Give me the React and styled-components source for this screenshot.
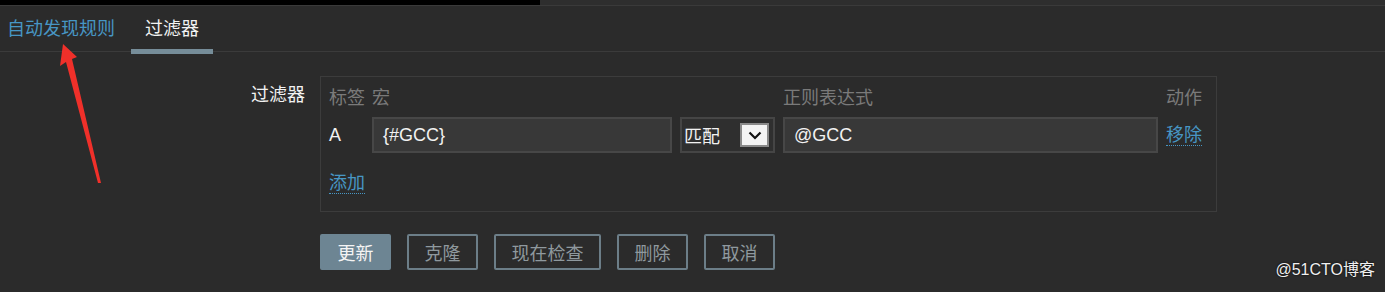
import React from "react";
import styled, { createGlobalStyle } from "styled-components";

const GlobalStyle = createGlobalStyle`
  html, body {
    margin: 0;
    padding: 0;
    background: #2b2b2b;
    overflow: hidden;
  }
  body {
    font-family: "Liberation Sans", "Noto Sans CJK SC", sans-serif;
    font-size: 18px;
    color: #f2f2f2;
  }
`;

const Page = styled.div`
  position: relative;
  width: 1385px;
  height: 292px;
  background: #2b2b2b;
`;

const TopStrip = styled.div`
  display: flex;
  height: 5px;
  border-bottom: 1px solid #3a3a3a;
  .dark {
    width: 540px;
    background: #000;
  }
  .rest {
    flex: 1;
    background: #2e2e2e;
  }
`;

const TabBar = styled.div`
  display: flex;
  height: 45px;
  border-bottom: 1px solid #3b3b3b;
`;

const Tab = styled.div`
  position: relative;
  display: flex;
  align-items: center;
  padding: 0 14px;
  line-height: 24px;
  white-space: nowrap;
  color: ${(p) => (p.$active ? "#f2f2f2" : "#4796c4")};
  &:first-child {
    padding-left: 7px;
    padding-right: 16px;
  }
  ${(p) =>
    p.$active &&
    `
    &::after {
      content: "";
      position: absolute;
      left: 0;
      right: 0;
      bottom: -3px;
      height: 5px;
      background: #768d99;
    }
  `}
`;

const Form = styled.div`
  padding-top: 24px;
`;

const FormRow = styled.div`
  display: flex;
  gap: 15px;
`;

const Label = styled.div`
  width: 305px;
  text-align: right;
  padding-top: 7px;
  line-height: 24px;
  color: #f2f2f2;
`;

const FilterBox = styled.div`
  width: 897px;
  box-sizing: border-box;
  border: 1px solid #3c3c3c;
  padding: 6px 9px 15px 8px;
`;

const Grid = styled.div`
  display: grid;
  grid-template-columns: 35px 300px 95px 375px 1fr;
  column-gap: 8px;
  row-gap: 4px;
  align-items: center;
  white-space: nowrap;
`;

const Head = styled.div`
  line-height: 30px;
  color: #7a7a7a;
`;

const Cell = styled.div`
  line-height: 24px;
  color: #f2f2f2;
`;

const TextInput = styled.div`
  height: 36px;
  box-sizing: border-box;
  border: 2px solid #474747;
  background: #383838;
  padding: 0 9px;
  display: flex;
  align-items: center;
  color: #f2f2f2;
`;

const Select = styled.div`
  height: 36px;
  box-sizing: border-box;
  border: 2px solid #454545;
  background: #2f2f2f;
  padding: 0 4px 0 2px;
  display: flex;
  align-items: center;
  justify-content: space-between;
  color: #f2f2f2;
`;

const SelectButton = styled.div`
  width: 29px;
  height: 24px;
  box-sizing: border-box;
  background: #f4f4f4;
  border: 2px solid #8a8a8a;
  display: flex;
  align-items: center;
  justify-content: center;
`;

const Link = styled.span`
  color: #4796c4;
  border-bottom: 1px dotted #4796c4;
  line-height: 24px;
`;

const AddRow = styled.div`
  margin-top: 17px;
  line-height: 26px;
`;

const Buttons = styled.div`
  display: flex;
  gap: 16px;
  margin: 22px 0 0 320px;
`;

const Button = styled.div`
  height: 36px;
  box-sizing: border-box;
  padding: 0 15.5px;
  border: 2px solid #6c7e88;
  border-radius: 2px;
  display: flex;
  align-items: center;
  white-space: nowrap;
  background: ${(p) => (p.$primary ? "#6d8593" : "transparent")};
  color: ${(p) => (p.$primary ? "#f4f4f4" : "#8f999e")};
  border-color: ${(p) => (p.$primary ? "#6d8593" : "#6c7e88")};
`;

const Watermark = styled.div`
  position: absolute;
  right: 10px;
  bottom: 12px;
  font-size: 16px;
  color: #f0f0f0;
  text-shadow: 0 0 2px #000;
`;

const Arrow = styled.svg`
  position: absolute;
  left: 0;
  top: 0;
  pointer-events: none;
`;

const Chevron = () => (
  <svg width="14" height="9" viewBox="0 0 14 9">
    <path d="M1.5 1.5 L7 7 L12.5 1.5" fill="none" stroke="#111" strokeWidth="2.2" />
  </svg>
);

export default function App() {
  const buttons = ["更新", "克隆", "现在检查", "删除", "取消"];
  return (
    <>
      <GlobalStyle />
      <Page>
        <TopStrip>
          <div className="dark" />
          <div className="rest" />
        </TopStrip>
        <TabBar>
          <Tab>自动发现规则</Tab>
          <Tab $active>过滤器</Tab>
        </TabBar>
        <Form>
          <FormRow>
            <Label>过滤器</Label>
            <FilterBox>
              <Grid>
                <Head>标签</Head>
                <Head>宏</Head>
                <Head />
                <Head>正则表达式</Head>
                <Head>动作</Head>
                <Cell>A</Cell>
                <TextInput>{"{#GCC}"}</TextInput>
                <Select>
                  <span>匹配</span>
                  <SelectButton>
                    <Chevron />
                  </SelectButton>
                </Select>
                <TextInput>@GCC</TextInput>
                <Cell>
                  <Link>移除</Link>
                </Cell>
              </Grid>
              <AddRow>
                <Link>添加</Link>
              </AddRow>
            </FilterBox>
          </FormRow>
          <Buttons>
            {buttons.map((b, i) => (
              <Button key={b} $primary={i === 0}>
                {b}
              </Button>
            ))}
          </Buttons>
        </Form>
        <Watermark>@51CTO博客</Watermark>
        <Arrow width="120" height="200" viewBox="0 0 120 200">
          <polygon
            points="63,44 77,57 72,59 101,183 98,183 66,62 60,66"
            fill="#f0302a"
          />
        </Arrow>
      </Page>
    </>
  );
}
